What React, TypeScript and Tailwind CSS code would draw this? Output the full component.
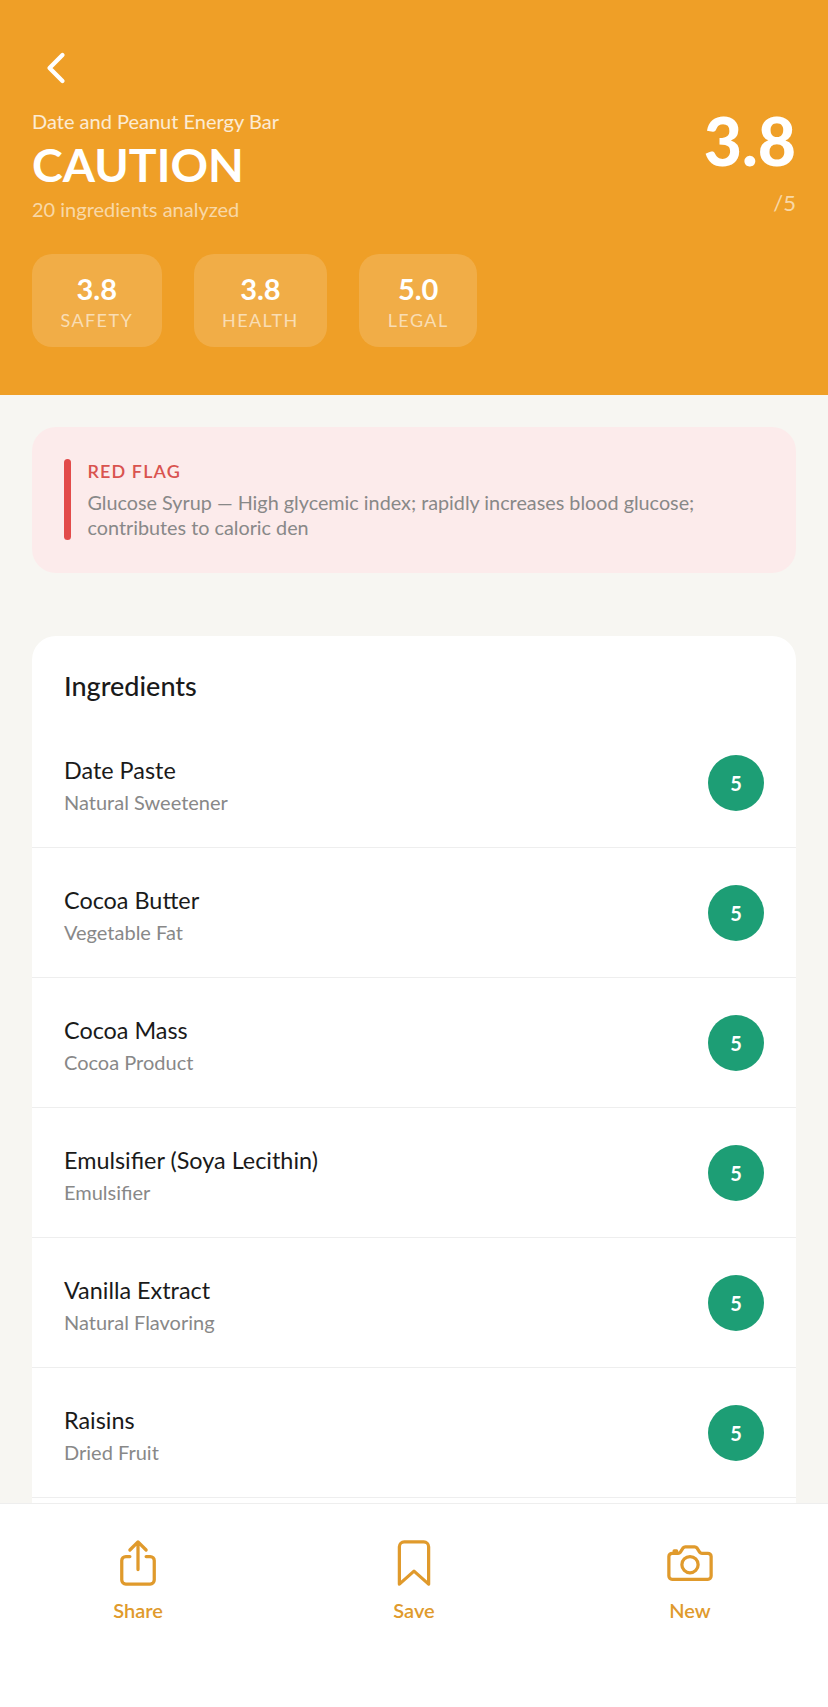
import { IoBookmarkOutline, IoCameraOutline, IoChevronBack, IoShareOutline } from 'react-icons/io5';

const stats = [
  { value: '3.8', label: 'SAFETY' },
  { value: '3.8', label: 'HEALTH' },
  { value: '5.0', label: 'LEGAL' },
];

const ingredients = [
  { name: 'Date Paste', kind: 'Natural Sweetener' },
  { name: 'Cocoa Butter', kind: 'Vegetable Fat' },
  { name: 'Cocoa Mass', kind: 'Cocoa Product' },
  { name: 'Emulsifier (Soya Lecithin)', kind: 'Emulsifier' },
  { name: 'Vanilla Extract', kind: 'Natural Flavoring' },
  { name: 'Raisins', kind: 'Dried Fruit' },
];

const actions = [
  { label: 'Share', Icon: IoShareOutline },
  { label: 'Save', Icon: IoBookmarkOutline },
  { label: 'New', Icon: IoCameraOutline },
];

export default function App() {
  return (
    <div className="flex h-[1707px] w-[828px] flex-col overflow-hidden bg-[#f7f6f2] font-['Lato',sans-serif]">
      <div className="flex-1 overflow-hidden">
        <header className="h-[395px] bg-[#ef9f27] px-8 pt-[45px] text-white">
          <IoChevronBack className="ml-[1px] block h-[46px] w-[46px] text-white" />
          <div className="mt-[18px] flex justify-between">
            <div>
              <p className="text-[20px] leading-[24px] text-white/80">Date and Peanut Energy Bar</p>
              <h1 className="mt-[2px] text-[46.5px] font-bold leading-[58px]">CAUTION</h1>
              <p className="mt-[3px] text-[20px] leading-[26px] text-white/60">20 ingredients analyzed</p>
            </div>
            <div className="-mt-[9px] text-right">
              <p className="text-[66px] font-black leading-[82px]">3.8</p>
              <p className="mt-[7px] text-[22px] leading-[28px] text-white/60">/5</p>
            </div>
          </div>
          <div className="mt-[32px] flex gap-8">
            {stats.map((s) => (
              <div key={s.label} className="flex h-[93px] flex-col items-center justify-center rounded-[20px] bg-white/15 px-[28.5px] pt-[2px]">
                <span className="text-[29px] font-bold leading-[34px]">{s.value}</span>
                <span className="mt-[3px] text-[18px] leading-[22px] tracking-[1.4px] text-white/60">{s.label}</span>
              </div>
            ))}
          </div>
        </header>

        <div className="mx-8 mt-8 flex h-[146px] gap-[17px] rounded-[24px] bg-[#fcebeb] px-8 pt-8">
          <div className="h-[81px] w-2 rounded-full bg-[#e24b4a]" />
          <div>
            <p className="text-[18px] font-semibold leading-[24px] tracking-[1.1px] text-[#d9534f]">RED FLAG</p>
            <p className="mt-[7px] text-[19.8px] leading-[25px] text-[#888888]">
              Glucose Syrup — High glycemic index; rapidly increases blood glucose; contributes to caloric den
            </p>
          </div>
        </div>

        <section className="mx-8 mt-[63px] rounded-t-[24px] bg-white pb-6 pt-[33px]">
          <h2 className="px-8 text-[27px] font-medium leading-[34px] text-[#1a1a1a]">Ingredients</h2>
          <ul className="mt-[15px]">
            {ingredients.map((item) => (
              <li key={item.name} className="flex h-[130px] items-center justify-between border-b border-[#eeeeee] px-8">
                <div className="pt-[5px]">
                  <p className="text-[23.4px] leading-[30px] text-[#1a1a1a]">{item.name}</p>
                  <p className="mt-[4px] text-[20px] leading-[26px] text-[#888888]">{item.kind}</p>
                </div>
                <div className="flex h-[56px] w-[56px] items-center justify-center rounded-full bg-[#1d9e75] text-[20px] font-bold text-white">
                  5
                </div>
              </li>
            ))}
          </ul>
        </section>
      </div>

      <nav className="grid h-[204px] grid-cols-3 border-t border-[#eeeeee] bg-white pt-[33px]">
        {actions.map(({ label, Icon }) => (
          <button key={label} className="flex flex-col items-center self-start text-[#e09a2c]">
            <Icon className="h-[52px] w-[52px]" />
            <span className="mt-[9px] text-[20px] font-semibold leading-[24px]">{label}</span>
          </button>
        ))}
      </nav>
    </div>
  );
}
